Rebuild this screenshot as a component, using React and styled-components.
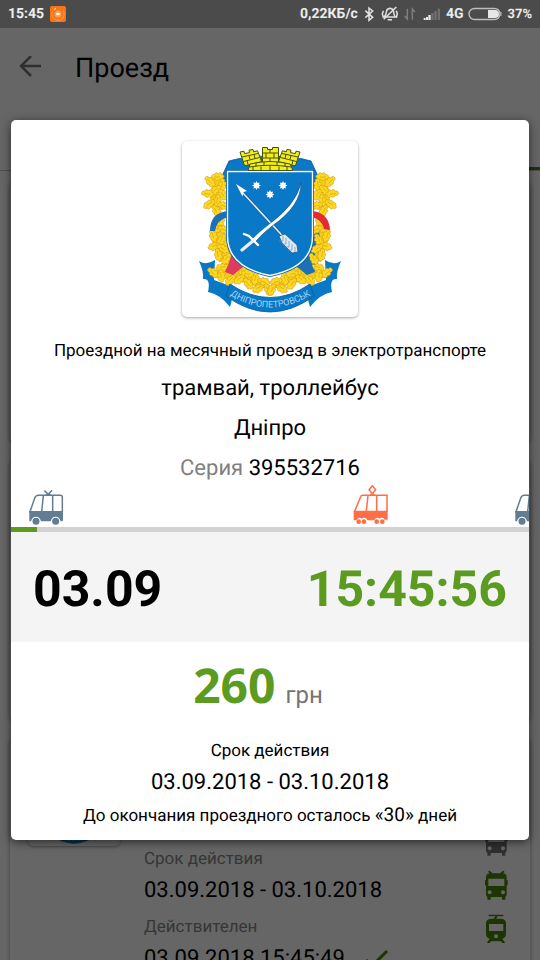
import React from 'react';
import styled, { createGlobalStyle } from 'styled-components';

const GREEN = '#5b9b1f';
const DEEP_GREEN = '#4a8408';
const SLATE = '#627d92';
const CORAL = '#ff6e47';

const GlobalStyle = createGlobalStyle`
  * {
    box-sizing: border-box;
  }

  body {
    margin: 0;
    font-family: Roboto, 'Liberation Sans', sans-serif;
    color: #000;
    text-rendering: geometricPrecision;
  }
`;

const Screen = styled.div`
  position: relative;
  display: flex;
  flex-direction: column;
  height: 100vh;
  overflow: hidden;
  background: #fff;
`;

const StatusBar = styled.header`
  position: relative;
  z-index: 2;
  display: flex;
  align-items: center;
  justify-content: space-between;
  flex: none;
  height: 28px;
  padding: 0 8px;
  background: #4b4b4b;
  color: #ececec;
  font-size: 14px;
  font-weight: 700;
`;

const StatusGroup = styled.div`
  display: flex;
  align-items: center;
  gap: ${props => props.gap}px;
`;

const StatusText = styled.span`
  font-size: ${props => props.small ? '13px' : '14px'};
`;

const AppBar = styled.div`
  display: flex;
  align-items: center;
  flex: none;
  gap: 33px;
  height: 80px;
  padding: 0 18px;
`;

const BackButton = styled.button`
  display: flex;
  padding: 0;
  border: none;
  background: none;
  color: #777;
  cursor: pointer;
`;

const PageTitle = styled.h1`
  margin: 0;
  font-size: 27px;
  font-weight: 400;
`;

const TabStrip = styled.div`
  display: flex;
  justify-content: flex-end;
  flex: none;
  height: 63px;
  border-bottom: 1px solid #c4c4c4;
`;

const ActiveTab = styled.div`
  width: 50%;
  border-bottom: 3px solid ${DEEP_GREEN};
`;

const TicketList = styled.main`
  display: flex;
  flex-direction: column;
  gap: 20px;
  padding: 12px 10px;
`;

const TicketCard = styled.article`
  display: flex;
  flex: none;
  min-height: 258px;
  padding: 15px 18px;
  border-radius: 4px;
  background: #fff;
  box-shadow: 0 1px 4px rgba(0, 0, 0, 0.4);
`;

const TicketInfo = styled.div`
  flex: 1;
  padding: 93px 0 0 24px;
`;

const TicketLabel = styled.div`
  color: #888;
  font-size: 17px;
  line-height: 24px;
`;

const TicketValue = styled.div`
  display: flex;
  align-items: center;
  gap: 20px;
  margin: 4px 0 8px;
  font-size: 22px;
  line-height: 32px;
`;

const TransportList = styled.div`
  display: flex;
  flex-direction: column;
  gap: 14px;
  padding: 72px 4px 0 0;
`;

const Backdrop = styled.div`
  position: absolute;
  inset: 0;
  z-index: 1;
  display: flex;
  align-items: center;
  padding: 0 11px;
  background: rgba(0, 0, 0, 0.6);
`;

const Dialog = styled.section`
  flex: 1;
  display: flex;
  flex-direction: column;
  align-items: center;
  min-width: 0;
  padding: 21px 0 12px;
  overflow: hidden;
  border-radius: 5px;
  background: #fff;
  box-shadow: 0 2px 10px rgba(0, 0, 0, 0.6);
`;

const CrestBox = styled.div`
  width: ${props => props.size}px;
  height: ${props => props.size}px;
  border-radius: 5px;
  background: #fff;
  box-shadow: 0 1px 3px rgba(0, 0, 0, 0.35);

  svg {
    display: block;
  }
`;

const Details = styled.div`
  display: flex;
  flex-direction: column;
  align-items: center;
  gap: 12px;
  margin: 22px 0 2px;
`;

const Line = styled.div`
  font-size: ${props => props.large ? '22px' : '17px'};
  line-height: ${props => props.large ? '28px' : '24px'};
`;

const Muted = styled.span`
  color: #808080;
`;

const VehicleTrack = styled.div`
  display: flex;
  align-self: stretch;
  padding-left: 17px;
  overflow: hidden;
`;

const VehicleSlot = styled.div`
  flex: 0 0 162px;
  height: 42px;
`;

const Progress = styled.div`
  align-self: stretch;
  height: 5px;
  background: #d2d2d2;
`;

const ProgressFill = styled.div`
  height: 100%;
  background: ${GREEN};
`;

const ClockBand = styled.div`
  display: flex;
  align-items: center;
  justify-content: space-between;
  align-self: stretch;
  height: 110px;
  padding: 6px 22px 0;
  background: #f4f4f4;
`;

const ClockText = styled.time`
  color: ${props => props.accent ? GREEN : '#000'};
  font-size: 50px;
  font-weight: 700;
  line-height: 60px;
`;

const Price = styled.div`
  display: flex;
  align-items: baseline;
  gap: 10px;
  margin: 11px 0;
  padding-right: 24px;
  line-height: 66px;
`;

const Amount = styled.span`
  color: ${GREEN};
  font-family: 'Open Sans', 'Noto Sans', sans-serif;
  font-size: 48px;
  font-weight: 700;
`;

const Currency = styled.span`
  color: #757575;
  font-size: 24px;
`;

const Validity = styled.div`
  display: flex;
  flex-direction: column;
  align-items: center;
  gap: 6px;
`;

const Days = styled.span`
  font-size: 19px;
`;

const leafPath = [
  [36, 36], [28, 41], [40, 44], [33, 49], [26, 53], [41, 54], [35, 60], [27, 63], [42, 65], [34, 70],
  [38, 80], [34, 88], [42, 89], [31, 95], [39, 99], [32, 105], [41, 108], [36, 114], [44, 118], [40, 126],
  [31, 132], [39, 135], [48, 139], [52, 130], [56, 122], [60, 129], [57, 138], [66, 133], [66, 143],
  [73, 138], [76, 147], [82, 141], [86, 149],
];

const starPoints = Array.from({ length: 16 }, (_, i) => {
  const r = i % 2 ? 2.6 : 4.4;
  const a = (i * Math.PI) / 8;
  return `${(r * Math.sin(a)).toFixed(2)},${(-r * Math.cos(a)).toFixed(2)}`;
}).join(' ');

function OakBranch() {
  return (
    <g>
      <path d="M35 38l-3 20 5 12M36 78l-2 22 7 20M33 133l20 2 16 5 16 4" fill="none" stroke="#f3cb1c" strokeWidth="8" />
      <g fill="#fbd91d" stroke="#d79a1c" strokeWidth="0.6">
        {leafPath.map(([x, y], i) => (
          <g key={i} transform={`translate(${x} ${y}) rotate(${(i * 47) % 180})`}>
            <path d="M-6.5 0c0-2.5 2-3 3-2 0-2.6 3-3 3.5-1 1-2 4-1.600 3.600.7 2.600-.6 3.700 2.600 1.200 3.300 0 2.200-2.700 2.700-3.600 1.200-1 2-3.900 1.400-3.900-.5-2.200.8-3.800 0-3.800-1.700z" />
            <path d="M-4 0H2" fill="none" />
          </g>
        ))}
      </g>
    </g>
  );
}

function Bricks() {
  return (
    <g fill="#f4ee16" stroke="#46501a" strokeWidth="1">
      <path d="M58 11l4-.8.6 2.400 5-1-.6-2.400 4-.8.600 2.400 4-1 4 11-17 4z" />
      <path d="M118 11l-4-.8-.6 2.400-5-1 .6-2.400-4-.8-.6 2.400-4-1-4 11 17 4z" />
      <path d="M80.500 6.500h5v2h5v-2h6V22h-16z" />
      <path d="M68 23q20-5 40 0l3 6.500H66z" />
      <path fill="none" d="M60 16l16-3.500M61.500 20.500l16-4M67 14.500l1 4M72 13l1 4.500M65 19.500l1 4M116 16l-16-3.500M114.500 20.500l-16-4M109 14.500l-1 4M104 13l-1 4.500M111 19.500l-1 4M80.500 12h16M80.500 17h16M88 8v4M84 12v5M92 12v5M88 17v4M67 26q21-3.500 42 0M74 22v3.500M82 21v3.500M95 21v3.500M103 22v3.500M71 26v3.500M79 25.500v4M88 25v4.500M97 25.500v4M105 26v3.500" />
    </g>
  );
}

function Crest({ size, id }) {
  return (
    <svg width={size} height={size} viewBox="0 0 176 176" role="img" aria-label="Герб">
      <path d="M41 45V33l6-13q17-5 41-5t41 5l6 13v12z" fill="#0878c7" stroke="#07569c" strokeWidth="0.8" />
      <path d="M34 87l8 43 16 8V100z" fill="#f8d51c" />
      <path d="M142 87l-8 43-16 8V100z" fill="#1c70b8" />
      <path d="M33 119q-9 6-16 1 5 11 4 18 8-1 5 13 12 2 22 15 3-9 3-20L32 139z" fill="#0878c7" />
      <path d="M143 119q9 6 16 1-5 11-4 18-8-1-5 13-12 2-22 15-3-9-3-20l19-7z" fill="#0878c7" />
      <OakBranch />
      <g transform="matrix(-1 0 0 1 176 0)"><OakBranch /></g>
      <path d="M28 90q0-19 19-20v6q-12 2-14 14z" fill="#1c70b8" />
      <path d="M129 70q18 1 19 19l-6-1q-2-10-13-12z" fill="#e22b35" />
      <path d="M43 131q4-8 7-19l11 14-10 8z" fill="#de3b61" />
      <path d="M133 131q-4-8-7-19l-11 14 10 8z" fill="#1c70b8" />
      <path d="M48 143q40 27 80 0l4 12q-44 32-88 0z" fill="#0878c7" stroke="#075b9f" strokeWidth="0.8" />
      <path id={`${id}-motto`} d="M45 152q43 29 87 0" fill="none" />
      <text fill="#a9d3f1" fontFamily="Roboto, sans-serif" fontSize="9">
        <textPath href={`#${id}-motto`} startOffset="50%" textAnchor="middle">ДНІПРОПЕТРОВСЬК</textPath>
      </text>
      <path d="M45.500 30.500h85V95q0 31-42.500 39.500Q45.500 126 45.500 95z" fill="#0878c7" stroke="#075b9f" strokeWidth="3" />
      <path d="M45.500 30.500h85V95q0 31-42.500 39.500Q45.500 126 45.500 95z" fill="#0878c7" stroke="#fff" strokeWidth="1.400" />
      <Bricks />
      <g fill="#fff">
        <polygon points={starPoints} transform="translate(74.500 44.500)" />
        <polygon points={starPoints} transform="translate(101 44.500)" />
        <polygon points={starPoints} transform="translate(88 53.500)" />
      </g>
      <path d="M60 51l48 52" stroke="#12508a" strokeWidth="2.600" />
      <path d="M60 51l48 52" stroke="#e4eef7" strokeWidth="1.600" />
      <path d="M54 43l11 7-3.500 1-1 4.500z" fill="#fff" />
      <path d="M97 95l6-2 12 11 1 7-6 1-10-10z" fill="#dce8f3" stroke="#12508a" strokeWidth="0.700" />
      <path d="M101 95v5h-4M104 97v6h-4M107 100v6h-4M110 103v6h-4M113 106v5" stroke="#6f8fae" strokeWidth="0.700" fill="none" />
      <path d="M119 42q0 23-29 43-9 7-17 16l-3-3q8-8 16-14 28-20 33-42z" fill="#fff" stroke="#12508a" strokeWidth="0.600" />
      <path d="M72 99L60 109" stroke="#e8eff7" strokeWidth="3.200" strokeLinecap="round" />
      <path d="M62 93l5 2 6 6 3 3" fill="none" stroke="#fff" strokeWidth="2.400" strokeLinecap="round" />
    </svg>
  );
}

function Trolleybus() {
  return (
    <svg width="36" height="42" viewBox="84 15 108 126" fill="none" stroke={SLATE} strokeWidth="4.500">
      <path d="M89 98l15-43q3-9 11-9h66q6 0 6 6v45" />
      <path d="M130 47l-5 48M158 47v48M133 32l12 11 11-12M137 46l8-4 8 4" />
      <path d="M88 93h101v27q0 4-4 4h-3q-3-14-15-14t-15 14h-29q-3-14-15-14t-15 14h-5z" fill={SLATE} stroke="none" />
      <circle cx="108" cy="124" r="10.500" fill={SLATE} stroke="none" />
      <circle cx="167" cy="124" r="10.500" fill={SLATE} stroke="none" />
    </svg>
  );
}

function Tram() {
  return (
    <svg width="36" height="42" viewBox="40 15 108 126" fill="none" stroke={CORAL} strokeWidth="4.500">
      <path d="M47 96l19-46q1-4 6-4h73v50" />
      <path d="M88 46l-5 48M114 46v48M101 17l10 12-10 12-10-12zM95 46l6-6 6 6" />
      <path d="M45 92h102v27h-9q-2-6-8-6-4 0-7 3-3-3-7-3-7 0-9 8H86q-2-8-9-8-4 0-7 3-3-3-7-3-7 0-9 8h-9z" fill={CORAL} stroke="none" />
      <g fill={CORAL} stroke="none">
        <circle cx="60" cy="125" r="7" />
        <circle cx="76" cy="125" r="7" />
        <circle cx="114" cy="125" r="7" />
        <circle cx="131" cy="125" r="7" />
      </g>
    </svg>
  );
}

function BusFront({ wires, color }) {
  return (
    <svg width="24" height="30" viewBox="642 450 72 90" fill={color}>
      {wires && <path d="M656 454l10 8M702 454l-10 8" stroke={color} strokeWidth="6" fill="none" />}
      <path fillRule="evenodd" d="M658 460h42q10 2 10 12v8h3v16h-3v28q0 5-4 6v9h-10v-8h-34v8h-10v-9q-4-1-4-6v-28h-3v-16h3v-8q0-10 10-12zm-3 16v22h48v-22zm4 35a6 6 0 1 0 .1 0zm40 0a6 6 0 1 0 .1 0z" />
    </svg>
  );
}

function TramFront({ color }) {
  return (
    <svg width="24" height="30" viewBox="644 583 72 90" fill={color}>
      <path d="M658 585h44v5h-18l-3 8h-8l5-8h-20z" />
      <path fillRule="evenodd" d="M664 597h33q12 2 13 12v35q-1 11-11 13l9 13h-9l-4-5h-30l-4 5h-9l9-13q-10-2-11-13v-35q1-10 14-12zm-5 16v21h43v-21zm21 31a6 6 0 1 0 .1 0z" />
    </svg>
  );
}

function AppBadge() {
  return (
    <svg width="16" height="16" viewBox="0 0 16 16" fill="none">
      <rect width="16" height="16" rx="2" fill="#f87516" />
      <path d="M3 4.500A6.200 6.200 0 1 0 13 4.500" stroke="#ff9c55" strokeWidth="1" />
      <circle cx="8" cy="8" r="3.500" fill="#ff9a54" />
      <ellipse cx="8" cy="8" rx="2" ry="1.300" fill="#fff" />
      <path d="M4 3.500l2-1" stroke="#fff" />
    </svg>
  );
}

function StatusIcons() {
  return (
    <svg width="78" height="18" viewBox="250 14 234 54" fill="none" stroke="#e2e2e2" strokeWidth="4.500">
      <path d="M257 31l22 20-11 9V23l11 9-22 20" />
      <path d="M313 50q7-6 7-15 1-10 11-11 11 2 11 12 0 9 6 14zM324 58h13" />
      <path d="M312 57l38-37M311 31l-3 10 3 10M350 31l3 10-3 10" />
      <path d="M383 25v31l-8-9M398 58V26l8 9" stroke="#7d7d7d" />
      <g fill="#e9e9e9" stroke="none">
        <path d="M432 53h6v6h-6zM439 50h6v9h-6zM446 44h7v15h-7z" />
        <path d="M455 38h7v21h-7zM464 32h7v27h-7zM474 25h7v34h-7z" fill="#6f6f6f" />
      </g>
    </svg>
  );
}

function Battery() {
  return (
    <svg width="34" height="14" viewBox="0 0 34 14" fill="none">
      <rect x="1" y="1.500" width="31" height="11" rx="5.500" stroke="#bdbdbd" strokeWidth="1.400" />
      <path d="M20 3h7a4 4 0 0 1 0 8h-7z" fill="#e6e6e6" />
      <path d="M33 5v4" stroke="#bdbdbd" />
    </svg>
  );
}

function App() {
  return (
    <>
      <GlobalStyle />
      <Screen>
        <StatusBar>
          <StatusGroup gap={6}>
            <StatusText>15:45</StatusText>
            <AppBadge />
          </StatusGroup>
          <StatusGroup gap={5}>
            <StatusText>0,22КБ/с</StatusText>
            <StatusIcons />
            <StatusText>4G</StatusText>
            <Battery />
            <StatusText small>37%</StatusText>
          </StatusGroup>
        </StatusBar>

        <AppBar>
          <BackButton aria-label="Назад">
            <svg width="24" height="24" viewBox="0 0 24 24" fill="none" stroke="currentColor" strokeWidth="2.500">
              <path d="M23 10H4M13 0L3 10l10 10" />
            </svg>
          </BackButton>
          <PageTitle>Проезд</PageTitle>
        </AppBar>
        <TabStrip>
          <ActiveTab />
        </TabStrip>

        <TicketList>
          <TicketCard />
          <TicketCard />
          <TicketCard>
            <CrestBox size={92}>
              <Crest size={92} id="ticket" />
            </CrestBox>
            <TicketInfo>
              <TicketLabel>Срок действия</TicketLabel>
              <TicketValue>03.09.2018 - 03.10.2018</TicketValue>
              <TicketLabel>Действителен</TicketLabel>
              <TicketValue>
                03.09.2018 15:45:49
                <svg width="24" height="20" viewBox="0 0 24 20" fill="none" stroke={DEEP_GREEN} strokeWidth="3">
                  <path d="M1 11l6 6L22 2" />
                </svg>
              </TicketValue>
            </TicketInfo>
            <TransportList>
              <BusFront color="#777" />
              <BusFront wires color={DEEP_GREEN} />
              <TramFront color={DEEP_GREEN} />
            </TransportList>
          </TicketCard>
        </TicketList>

        <Backdrop>
          <Dialog role="dialog" aria-label="Проездной">
            <CrestBox size={176}>
              <Crest size={176} id="dialog" />
            </CrestBox>
            <Details>
              <Line>Проездной на месячный проезд в электротранспорте</Line>
              <Line large>трамвай, троллейбус</Line>
              <Line large>Дніпро</Line>
              <Line large><Muted>Серия</Muted> 395532716</Line>
            </Details>
            <VehicleTrack>
              <VehicleSlot><Trolleybus /></VehicleSlot>
              <VehicleSlot />
              <VehicleSlot><Tram /></VehicleSlot>
              <VehicleSlot><Trolleybus /></VehicleSlot>
            </VehicleTrack>
            <Progress role="progressbar" aria-valuenow={5}>
              <ProgressFill style={{ width: '5%' }} />
            </Progress>
            <ClockBand>
              <ClockText>03.09</ClockText>
              <ClockText accent>15:45:56</ClockText>
            </ClockBand>
            <Price>
              <Amount>260</Amount>
              <Currency>грн</Currency>
            </Price>
            <Validity>
              <Line>Срок действия</Line>
              <Line large>03.09.2018 - 03.10.2018</Line>
              <Line>До окончания проездного осталось <Days>«30»</Days> дней</Line>
            </Validity>
          </Dialog>
        </Backdrop>
      </Screen>
    </>
  );
}

export default App;
